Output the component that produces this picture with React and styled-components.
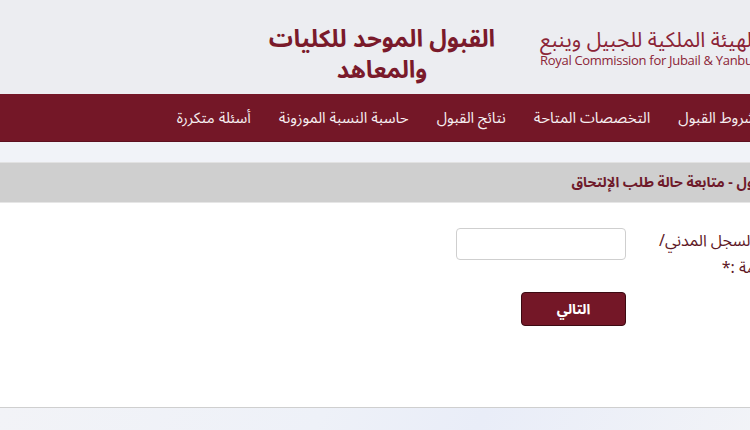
// admission portal - application status lookup
// header with logo + title, nav bar, section bar and the id form
import styled, { createGlobalStyle } from 'styled-components';

const GlobalStyle = createGlobalStyle`
    html, body {
        margin: 0;
        padding: 0;
        overflow: hidden;
        background: #ffffff;
    }
    body {
        font-family: "Noto Sans Arabic", "DejaVu Sans", sans-serif;
    }
`;

const Page = styled.div`
    width: 800px;
    direction: rtl;
    display: flex;
    flex-direction: column;
    min-height: 430px;
`;

const Header = styled.header`
    height: 94px;
    background: #ecedf1;
    display: flex;
    align-items: flex-start;
`;

const LogoBox = styled.div`
    width: 260px;
    direction: ltr;
    display: flex;
    flex-direction: column;
    align-items: flex-start;
    color: #8b2436;
    margin-top: 28px;
`;

const LogoArabic = styled.div`
    direction: rtl;
    font-size: 21px;
    line-height: 24px;
    white-space: nowrap;
`;

const LogoEnglish = styled.div`
    font-family: "Open Sans", sans-serif;
    font-size: 13px;
    letter-spacing: -0.3px;
    line-height: 17px;
    white-space: nowrap;
`;

const Title = styled.h1`
    margin: 24px 42px 0 0;
    width: 232px;
    text-align: center;
    font-size: 24px;
    line-height: 31px;
    font-weight: bold;
    color: #7a1a2b;
`;

const Nav = styled.nav`
    height: 47px;
    background: #741727;
    border-bottom: 1px solid #5d1020;
    display: flex;
    align-items: center;
    gap: 28px;
    padding-right: 44px;
`;

const NavItem = styled.a`
    color: #f6eef0;
    font-size: 15px;
    text-decoration: none;
    white-space: nowrap;
`;

const Band = styled.div`
    height: 20px;
    background: #f1f3f8;
`;

const SectionBar = styled.div`
    height: 39px;
    background: #cfcfcf;
    border-top: 1px solid #e2e2e2;
    border-bottom: 1px solid #e6e6e6;
    display: flex;
    align-items: center;
    padding-right: 25px;
    color: #6e1a2a;
    font-size: 14px;
    font-weight: bold;
    white-space: nowrap;
`;

const Main = styled.main`
    flex: 1;
    background: #ffffff;
    padding: 25px 20px 0 0;
    display: grid;
    grid-template-columns: 125px 170px;
    column-gap: 29px;
    align-content: start;
`;

const Label = styled.label`
    color: #5e1826;
    font-size: 16px;
    line-height: 27px;
`;

const Fields = styled.div`
    display: flex;
    flex-direction: column;
    align-items: flex-start;
    gap: 32px;
`;

const Input = styled.input`
    box-sizing: border-box;
    width: 170px;
    height: 32px;
    border: 1px solid #cfcfcf;
    border-radius: 4px;
    background: #fff;
    outline: none;
`;

const Button = styled.button`
    width: 105px;
    height: 34px;
    background: #741727;
    border: 1px solid #3c0a12;
    border-radius: 4px;
    color: #ffffff;
    font-family: inherit;
    font-size: 14px;
    font-weight: bold;
    cursor: pointer;
`;

const Footer = styled.footer`
    height: 22px;
    border-top: 1px solid #cfcfcf;
    background: linear-gradient(115deg, #f2f3f7 0%, #eef1f8 40%, #e9edf8 60%, #f3f4f7 100%);
`;

const navLinks = [
    'شروط القبول',
    'التخصصات المتاحة',
    'نتائج القبول',
    'حاسبة النسبة الموزونة',
    'أسئلة متكررة',
];

function App() {
    return (
        <>
            <GlobalStyle />
            <Page>
                <Header>
                    <LogoBox>
                        <LogoArabic>الهيئة الملكية للجبيل وينبع</LogoArabic>
                        <LogoEnglish>Royal Commission for Jubail &amp; Yanbu</LogoEnglish>
                    </LogoBox>
                    <Title>القبول الموحد للكليات<br />والمعاهد</Title>
                </Header>

                <Nav>
                    {navLinks.map((item) => (
                        <NavItem key={item} href="#">{item}</NavItem>
                    ))}
                </Nav>

                <Band />

                <SectionBar>القبول - متابعة حالة طلب الإلتحاق</SectionBar>

                <Main>
                    <Label htmlFor="civil-id">رقم السجل المدني/ الإقامة :*</Label>
                    <Fields>
                        <Input id="civil-id" type="text" />
                        <Button type="button">التالي</Button>
                    </Fields>
                </Main>

                <Footer />
            </Page>
        </>
    );
}

export default App;
